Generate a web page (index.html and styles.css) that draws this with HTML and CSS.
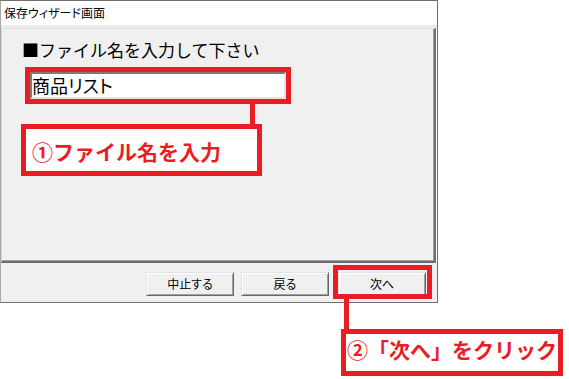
FILE: index.html
```html
<!DOCTYPE html>
<html lang="ja">
<head>
<meta charset="utf-8">
<title>保存ウィザード画面</title>
<link rel="stylesheet" href="styles.css">
</head>
<body>
<div class="window">
  <div class="titlebar">保存ウィザード画面</div>
  <div class="sep"></div>
  <div class="panel">
    <div class="heading">■ファイル名を入力して下さい</div>
    <div class="field"><div class="input">商品リスト</div></div>
  </div>
  <div class="footer">
    <div class="btn">中止する</div>
    <div class="btn">戻る</div>
    <div class="btn next">次へ</div>
  </div>
</div>
<div class="hilite hilite-next"></div>
<div class="link link-1"></div>
<div class="callout callout-1">①ファイル名を入力</div>
<div class="link link-2"></div>
<div class="callout callout-2">②「次へ」をクリック</div>
</body>
</html>
```
FILE: styles.css
```css
* { box-sizing: border-box; margin: 0; padding: 0; }
html, body { width: 569px; height: 379px; background: #fff; overflow: hidden; }
body { position: relative; font-family: "Noto Sans CJK JP", "Noto Sans", sans-serif; color: #000; }

.window {
  width: 438px; height: 303px;
  border: 1px solid #6e6e6e; border-left-color: #a8a8a8;
  background: #fff;
  display: flex; flex-direction: column;
}
.titlebar {
  height: 24px; flex: none;
  font-size: 12px; line-height: 24px;
  padding-left: 3px;
  font-feature-settings: "palt";
}
.sep { height: 3px; flex: none; background: #ebebeb; }
.panel {
  height: 235px; flex: none; margin-right: 1px;
  background: #f0f0f0;
  border-style: solid; border-width: 1px 2px 2px 1px;
  border-color: #e3e3e3 #6d6d6d #6d6d6d #d4d4d4;
  box-shadow: inset -1px -1px 0 #a0a0a0;
  padding: 8px 0 0 20px;
}
.heading { font-size: 17px; line-height: 25px; }
.field { margin: 5px 0 0 3px; width: 266px; border: 5px solid #ec1c24; }
.input {
  height: 27px; background: #fff;
  border: 2px solid; border-color: #7a7a7a #e3e3e3 #e3e3e3 #7a7a7a;
  font-size: 18px; line-height: 20px; padding-top: 1px;
  font-feature-settings: "palt";
}
.footer {
  flex: 1; background: #f0f0f0;
  display: flex; justify-content: flex-end; align-items: flex-start;
  padding: 9px 11px 0 0;
}
.btn {
  width: 88px; height: 24px;
  border: 1px solid; border-color: #e3e3e3 #696969 #696969 #e3e3e3;
  box-shadow: inset 1px 1px 0 #fff, inset -1px -1px 0 #a0a0a0;
  background: #f0f0f0;
  font-size: 12px; line-height: 21px; text-align: center;
  font-feature-settings: "palt";
}
.btn + .btn { margin-left: 7px; }
.btn.next { margin-left: 9px; }

.hilite { position: absolute; border: 5px solid #ec1c24; }
.hilite-next { left: 333px; top: 265px; width: 99px; height: 34px; }
.link { position: absolute; width: 5px; background: #ec1c24; }
.link-1 { left: 250px; top: 103px; height: 22px; }
.link-2 { left: 344px; top: 298px; height: 32px; }
.callout {
  position: absolute; background: #fff; border: 5px solid #ec1c24;
  color: #ec1c24; font-size: 21px; font-weight: 700; line-height: 31px;
  white-space: nowrap;
}
.callout-1 { left: 21px; top: 124px; width: 241px; height: 52px; padding: 7px 0 0 6px; }
.callout-2 { left: 341px; top: 329px; width: 222px; height: 47px; padding: 0 0 0 1px; }
```
